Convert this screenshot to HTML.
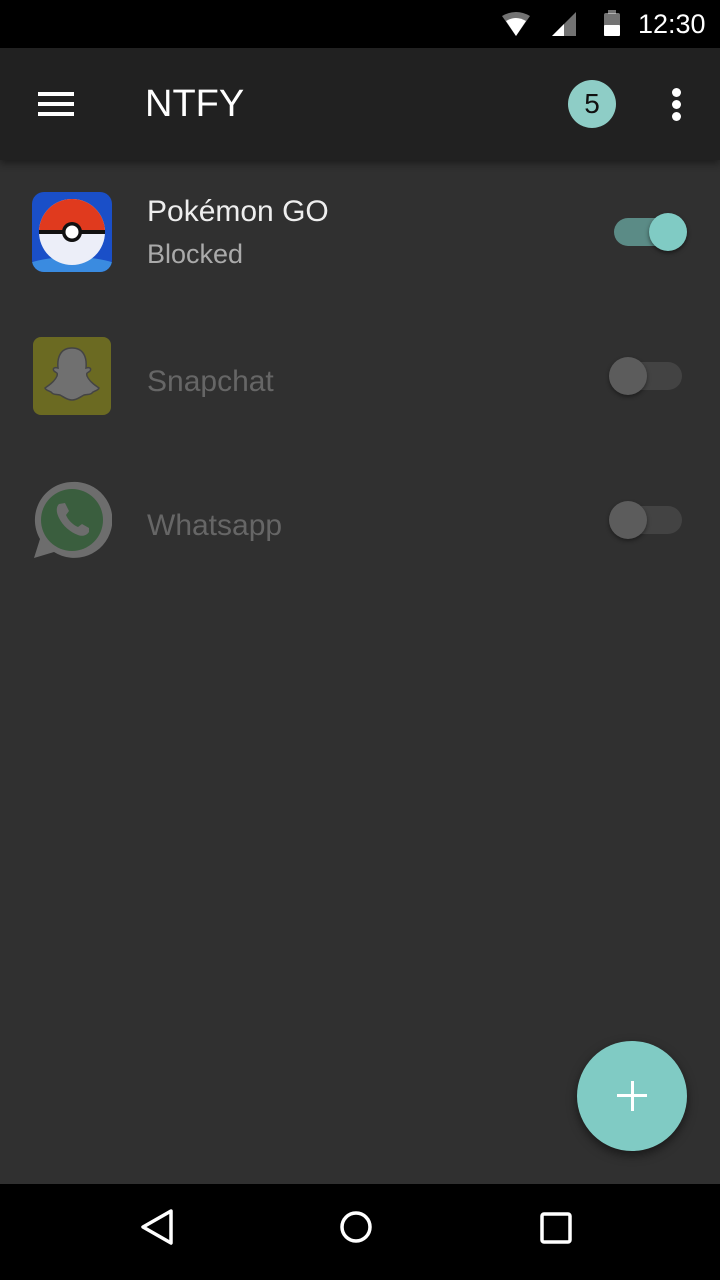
<!DOCTYPE html>
<html><head><meta charset="utf-8"><style>
*{margin:0;padding:0;box-sizing:border-box}
body{width:720px;height:1280px;background:#303030;font-family:"Liberation Sans",sans-serif;position:relative;overflow:hidden}
.abs{position:absolute}
.t{color:#fff}
</style></head><body>
<div class="abs" style="left:0;top:0;width:720px;height:48px;background:#000"></div>
<svg class="abs" style="left:500px;top:10px" width="120" height="28" viewBox="0 0 120 28">
<path d="M2 6 Q16 -2 30 6 L16 26 Z" fill="#fff" opacity="0.45"/>
<path d="M6 11 Q16 5 26 11 L16 26 Z" fill="#fff"/>
<path d="M52 26 L76 2 L76 26 Z" fill="#fff" opacity="0.45"/>
<path d="M52 26 L64 14 L64 26 Z" fill="#fff"/>
<rect x="104" y="3" width="16" height="23" rx="2" fill="#fff" opacity="0.45"/>
<rect x="108" y="0" width="8" height="4" fill="#fff" opacity="0.45"/>
<rect x="104" y="15" width="16" height="11" rx="1" fill="#fff"/>
</svg>
<div class="abs t" style="left:638px;top:9px;font-size:27px">12:30</div>
<div class="abs" style="left:0;top:48px;width:720px;height:112px;background:#212121;box-shadow:0 3px 8px rgba(0,0,0,.45)"></div>
<div class="abs" style="left:38px;top:92px;width:36px;height:4px;background:#fff;box-shadow:0 10px 0 #fff,0 20px 0 #fff"></div>
<div class="abs t" style="left:145px;top:83px;font-size:38px;font-weight:500">NTFY</div>
<div class="abs" style="left:568px;top:80px;width:48px;height:48px;border-radius:50%;background:#8ecdc6;color:#111;font-size:28px;text-align:center;line-height:48px">5</div>
<div class="abs" style="left:672px;top:88px;width:9px;height:9px;border-radius:50%;background:#fff;box-shadow:0 12px 0 #fff,0 24px 0 #fff"></div>

<svg class="abs" style="left:32px;top:192px" width="80" height="80" viewBox="0 0 80 80">
<defs><clipPath id="c"><rect width="80" height="80" rx="12"/></clipPath></defs>
<g clip-path="url(#c)"><rect width="80" height="80" fill="#1a4fc8"/><ellipse cx="40" cy="85" rx="60" ry="20" fill="#3a8be0"/>
<circle cx="40" cy="40" r="33" fill="#eceef8"/><path d="M7 40 A33 33 0 0 1 73 40 Z" fill="#e03a1e"/>
<rect x="7" y="38" width="66" height="4" fill="#111"/><circle cx="40" cy="40" r="10" fill="#111"/><circle cx="40" cy="40" r="6.5" fill="#fff"/></g>
</svg>
<div class="abs" style="left:147px;top:195px;font-size:30px;color:#eee">Pokémon GO</div>
<div class="abs" style="left:147px;top:239px;font-size:27px;color:#aaa">Blocked</div>
<div class="abs" style="left:614px;top:218px;width:70px;height:28px;border-radius:14px;background:#5b8b86"></div>
<div class="abs" style="left:649px;top:213px;width:38px;height:38px;border-radius:50%;background:#80cbc4;box-shadow:0 2px 4px rgba(0,0,0,.5)"></div>

<svg class="abs" style="left:32px;top:336px" width="80" height="80" viewBox="0 0 80 80">
<rect x="1" y="1" width="78" height="78" rx="8" fill="#6b6a22"/>
<path d="M40 12 C28 12 25 22 26 32 C23 31 20 32 22 35 C24 37 26 36 25 40 C22 47 14 51 13 52 C14 55 19 55 20 57 C22 59 25 58 28 59 C32 61 35 64 40 64 C45 64 48 61 52 59 C55 58 58 59 60 57 C61 55 66 55 67 52 C66 51 58 47 55 40 C54 36 56 37 58 35 C60 32 57 31 54 32 C55 22 52 12 40 12 Z" fill="#707070" stroke="#444" stroke-width="1.5"/>
</svg>
<div class="abs" style="left:147px;top:365px;font-size:30px;color:#666">Snapchat</div>
<div class="abs" style="left:610px;top:362px;width:72px;height:28px;border-radius:14px;background:#434343"></div>
<div class="abs" style="left:609px;top:357px;width:38px;height:38px;border-radius:50%;background:#5c5c5c;box-shadow:0 2px 4px rgba(0,0,0,.4)"></div>

<svg class="abs" style="left:32px;top:480px" width="80" height="80" viewBox="0 0 80 80">
<path d="M40 2 A38 38 0 1 1 22 72 L2 78 L8 59 A38 38 0 0 1 40 2 Z" fill="#6d6d6d"/>
<circle cx="40" cy="40" r="31" fill="#3a5e3e"/>
<path d="M27 24 C24 27 24 32 27 38 C31 46 38 52 46 55 C51 57 55 55 57 52 L57 48 L50 44 L46 47 C41 45 36 40 34 35 L37 31 L33 23 Z" fill="#6d6d6d"/>
</svg>
<div class="abs" style="left:147px;top:509px;font-size:30px;color:#666">Whatsapp</div>
<div class="abs" style="left:610px;top:506px;width:72px;height:28px;border-radius:14px;background:#434343"></div>
<div class="abs" style="left:609px;top:501px;width:38px;height:38px;border-radius:50%;background:#5c5c5c;box-shadow:0 2px 4px rgba(0,0,0,.4)"></div>

<div class="abs" style="left:577px;top:1041px;width:110px;height:110px;border-radius:50%;background:#80cbc4;box-shadow:0 4px 10px rgba(0,0,0,.5)"></div>
<div class="abs" style="left:617px;top:1094px;width:30px;height:3px;background:#fff"></div>
<div class="abs" style="left:630.5px;top:1081px;width:3px;height:30px;background:#fff"></div>

<div class="abs" style="left:0;top:1184px;width:720px;height:96px;background:#000"></div>
<svg class="abs" style="left:0;top:1184px" width="720" height="96">
<path d="M171 27 L143 43 L171 59 Z" fill="none" stroke="#fff" stroke-width="3.5" stroke-linejoin="round"/>
<circle cx="356" cy="43" r="14" fill="none" stroke="#fff" stroke-width="3.5"/>
<rect x="542" y="30" width="28" height="28" rx="2" fill="none" stroke="#fff" stroke-width="3.5"/>
</svg>
</body></html>
